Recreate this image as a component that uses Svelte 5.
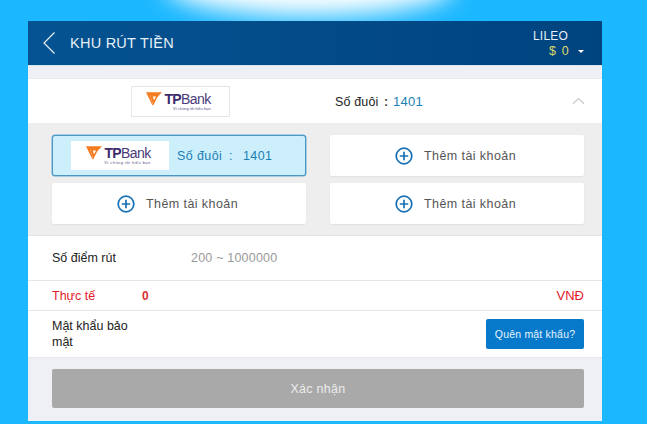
<script>
  const accounts = [
    { linked: true, tail: '1401' },
    { linked: false },
    { linked: false },
    { linked: false }
  ];
</script>

{#snippet logo()}
  <div class="logo">
    <div class="logo-top">
      <svg class="mark" viewBox="0 0 18 15" aria-hidden="true">
        <path d="M0 0H18L12.5 5.5H9.6L10.4 3H4.6L8 14.5H7.2Z" fill="#f47b20" />
        <path d="M4.6 3H14L8.2 14.5Z" fill="#f47b20" />
        <path d="M7.6 4.6H11.4L9 9Z" fill="#fff" />
      </svg>
      <span class="tp">TP</span><span class="bank">Bank</span>
    </div>
    <div class="slogan">Vì chúng tôi hiểu bạn</div>
  </div>
{/snippet}

<div class="page">
  <div class="glow"></div>
  <main class="panel">
    <header class="topbar">
      <svg class="back" viewBox="0 0 14 24" aria-hidden="true">
        <path d="M12.5 1.5 2 12l10.5 10.5" fill="none" stroke="#e6f0f8" stroke-width="1.2" />
      </svg>
      <h1>KHU RÚT TIỀN</h1>
      <div class="user">
        <div class="name">LILEO</div>
        <div class="balance"><span>$ 0</span><i class="caret"></i></div>
      </div>
    </header>

    <section class="selected">
      <div class="selected-logo">{@render logo()}</div>
      <div class="selected-tail">Số đuôi <b class="colon">:</b> <span class="num">1401</span></div>
      <svg class="chevron" viewBox="0 0 14 8" aria-hidden="true">
        <path d="M1 7 7 1.5 13 7" fill="none" stroke="#c9c9c9" stroke-width="1.3" />
      </svg>
    </section>

    <section class="accounts">
      {#each accounts as acc}
        {#if acc.linked}
          <div class="card active">
            <div class="card-logo">{@render logo()}</div>
            <div class="card-tail"><span class="tail-label">Số đuôi <span class="colon">:</span></span><span>{acc.tail}</span></div>
          </div>
        {:else}
          <div class="card">
            <svg class="plus" viewBox="0 0 18 18" aria-hidden="true">
              <circle cx="9" cy="9" r="7.8" fill="none" stroke="#1670b5" stroke-width="1.7" />
              <path d="M4.8 9h8.4M9 4.8v8.4" stroke="#1670b5" stroke-width="1.7" />
            </svg>
            <span>Thêm tài khoản</span>
          </div>
        {/if}
      {/each}
    </section>

    <section class="form">
      <div class="row amount">
        <span class="label">Số điểm rút</span>
        <span class="hint">200 ~ 1000000</span>
      </div>
      <div class="row actual">
        <span class="label">Thực tế</span>
        <b class="zero">0</b>
        <span class="unit">VNĐ</span>
      </div>
      <div class="row secure">
        <span class="label">Mật khẩu bảo mật</span>
        <button class="forgot" type="button">Quên mật khẩu?</button>
      </div>
    </section>

    <div class="submit-wrap">
      <button class="submit" type="button">Xác nhận</button>
    </div>
  </main>
</div>

<style>
  :global(body) {
    background: #1cb8ff;
  }

  .page {
    position: relative;
    width: 647px;
    height: 424px;
    overflow: hidden;
    padding: 21px 45px 3px 28px;
    box-sizing: border-box;
    background: #1cb8ff;
    font-family: "Liberation Sans", Arial, sans-serif;
  }

  .glow {
    position: absolute;
    left: 165px;
    top: -46px;
    width: 290px;
    height: 62px;
    border-radius: 50%;
    background: #fff;
    filter: blur(12px);
  }

  .panel {
    position: relative;
    height: 100%;
    display: flex;
    flex-direction: column;
    background: #eff0f5;
  }

  .topbar {
    flex: none;
    height: 45px;
    display: flex;
    align-items: center;
    padding: 0 18px 0 14px;
    background: linear-gradient(90deg, #055392, #00437f);
    border-bottom: 1px solid #d9e6f2;
    box-sizing: border-box;
    color: #e6f0f8;
  }

  .back {
    width: 14px;
    height: 24px;
  }

  h1 {
    margin: 0 0 0 14px;
    font-size: 14.5px;
    font-weight: 400;
    letter-spacing: 0.25px;
    flex: 1;
  }

  .user {
    font-size: 12.5px;
    line-height: 15px;
    letter-spacing: 0.4px;
    margin-top: 1px;
  }

  .name {
    padding-right: 16px;
    font-size: 12px;
    letter-spacing: 0.2px;
    text-align: right;
  }

  .balance {
    display: flex;
    align-items: center;
    justify-content: flex-end;
    color: #dcd86a;
    letter-spacing: 1.2px;
  }

  .caret {
    margin-left: 8px;
    width: 0;
    height: 0;
    border: 3px solid transparent;
    border-top: 3px solid #fff;
    border-bottom: 0;
  }

  .selected {
    flex: none;
    margin-top: 12px;
    height: 45px;
    display: flex;
    align-items: center;
    background: #fff;
    padding-left: 103px;
    padding-right: 17px;
    border-top: 1px solid #eaeaea;
    box-sizing: border-box;
  }

  .selected-logo {
    width: 99px;
    height: 31px;
    padding-right: 4px;
    border: 1px solid #e6e6e6;
    display: flex;
    align-items: center;
    justify-content: center;
    box-sizing: border-box;
  }

  .selected-tail {
    margin-left: 105px;
    flex: 1;
    font-size: 12.5px;
    letter-spacing: 0.15px;
    color: #222;
  }

  .selected-tail .colon {
    margin-left: 2px;
    color: #444;
  }

  .num {
    font-size: 13px;
    letter-spacing: 0.3px;
    color: #1a7fb5;
    margin-left: 1px;
  }

  .chevron {
    width: 13px;
    height: 8px;
  }

  .accounts {
    flex: none;
    height: 112px;
    padding: 12px 18px 11px 24px;
    box-sizing: border-box;
    background: #eeeeee;
    display: grid;
    grid-template-columns: 254px 254px;
    grid-template-rows: 41px 41px;
    column-gap: 24px;
    row-gap: 7px;
  }

  .card {
    display: flex;
    align-items: center;
    justify-content: center;
    gap: 11px;
    padding-right: 3px;
    background: #fff;
    border-radius: 2px;
    box-shadow: 0 1px 2px rgba(0, 0, 0, 0.06);
    font-size: 12.5px;
    letter-spacing: 0.42px;
    color: #555;
  }

  .card.active {
    justify-content: flex-start;
    gap: 0;
    padding: 5px 0 5px 18px;
    box-sizing: border-box;
    background: #cdeffc;
    border: 1px solid #4a96c4;
    border-radius: 3px;
    box-shadow: 0 0 0 0.5px #6aa9cf;
  }

  .card-logo {
    width: 98px;
    height: 29px;
    padding-right: 3px;
    box-sizing: border-box;
    background: #fff;
    display: flex;
    align-items: center;
    justify-content: center;
  }

  .card-tail {
    margin-left: 8px;
    display: flex;
    gap: 10px;
    font-size: 12.5px;
    letter-spacing: 0.4px;
    color: #1a7fb5;
  }

  .tail-label .colon {
    margin-left: 3px;
  }

  .plus {
    width: 18px;
    height: 18px;
  }

  .logo {
    display: flex;
    flex-direction: column;
    align-items: center;
    line-height: 1;
  }

  .logo-top {
    display: flex;
    align-items: center;
    font-size: 14px;
    letter-spacing: -0.6px;
  }

  .mark {
    width: 16px;
    height: 14px;
    margin-right: 2px;
  }

  .tp {
    font-weight: 700;
    color: #3d2a6b;
  }

  .bank {
    color: #4a3a78;
  }

  .slogan {
    align-self: flex-end;
    font-size: 4px;
    color: #5d5288;
    margin-top: 1px;
  }

  .form {
    flex: none;
    background: #fff;
    border-top: 1px solid #e4e4e4;
  }

  .row {
    display: flex;
    align-items: center;
    padding: 0 18px 0 24px;
    font-size: 12.5px;
    color: #222;
    box-sizing: border-box;
  }

  .amount {
    height: 45px;
    border-bottom: 1px solid #e6e6e6;
  }

  .amount .label {
    width: 139px;
  }

  .hint {
    color: #999;
    letter-spacing: 0.2px;
  }

  .actual {
    height: 30px;
    border-bottom: 1px solid #e6e6e6;
    color: #e3202a;
  }

  .actual .label {
    width: 90px;
  }

  .zero {
    flex: 1;
    font-size: 12px;
    color: #d93036;
  }

  .unit {
    font-size: 13px;
  }

  .secure {
    height: 46px;
    justify-content: space-between;
  }

  .secure .label {
    width: 90px;
    line-height: 16px;
  }

  .forgot {
    width: 98px;
    height: 30px;
    padding: 0;
    border: 0;
    border-radius: 2px;
    background: #0679cb;
    color: #e6f4fc;
    font: 10.5px "Liberation Sans", Arial, sans-serif;
    letter-spacing: 0.2px;
  }

  .submit-wrap {
    flex: 1;
    padding: 11px 18px 0 24px;
    border-top: 1px solid #e8e8e8;
  }

  .submit {
    width: 100%;
    height: 39px;
    border: 0;
    border-radius: 2px;
    background: #a9a9a9;
    color: #ececec;
    font: 12.5px "Liberation Sans", Arial, sans-serif;
    letter-spacing: 0.3px;
  }
</style>
